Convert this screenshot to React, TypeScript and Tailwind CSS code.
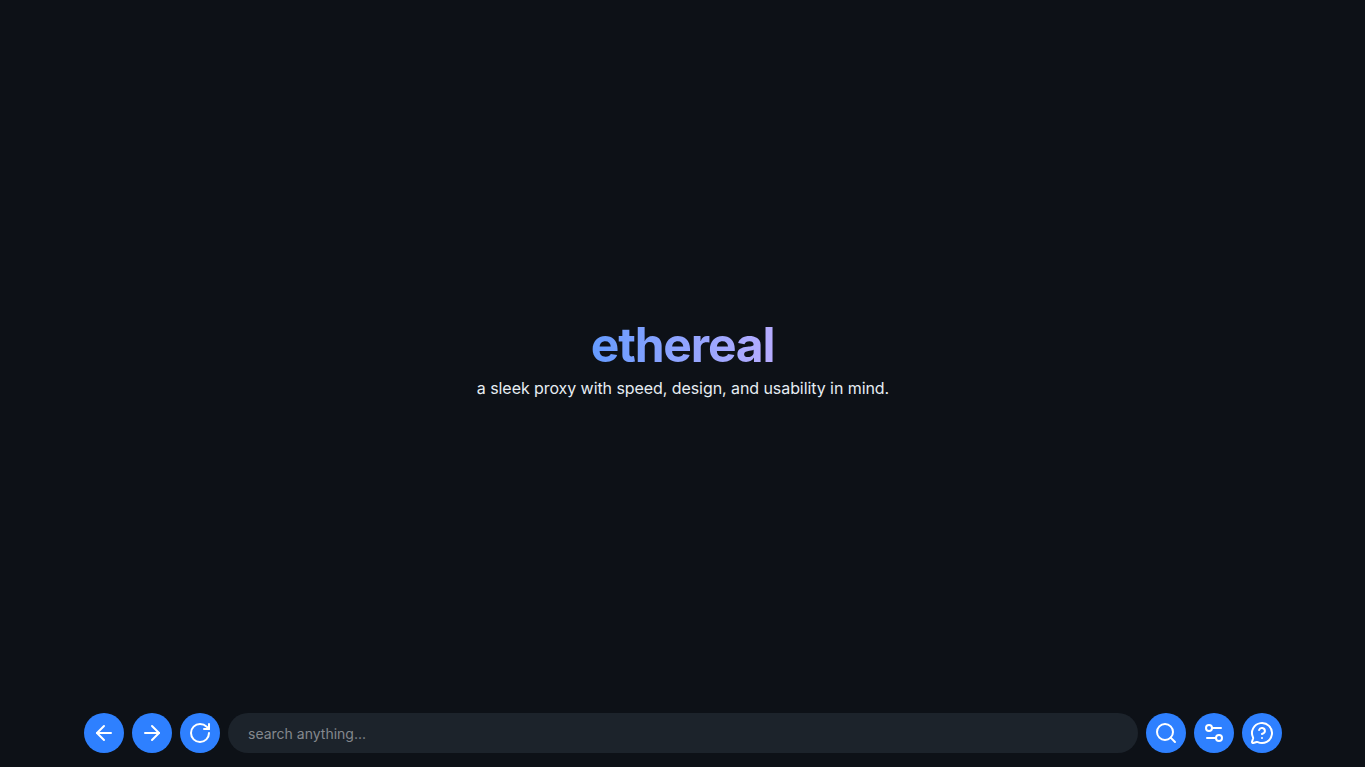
import { ArrowLeft, ArrowRight, RotateCw, Search, Settings2, MessageCircleQuestion } from 'lucide-react';
import type { ReactNode } from 'react';

function RoundButton({ children }: { children: ReactNode }) {
  return (
    <button className="w-10 h-10 shrink-0 rounded-full bg-[#2e80ff] text-white flex items-center justify-center">
      {children}
    </button>
  );
}

export default function App() {
  return (
    <div className="h-screen bg-[#0d1117] flex flex-col font-['Inter',sans-serif]">
      {/* hero */}
      <main className="flex-1 flex flex-col items-center justify-center pt-[4px]">
        <h1 className="text-[48px] leading-[56px] font-bold tracking-[-0.025em] text-transparent bg-clip-text bg-gradient-to-r from-[#649bff] to-[#b6acff]">
          ethereal
        </h1>
        <p className="text-base leading-6 tracking-[-0.07px] text-[#e6edf3] mt-[3px] ml-[1px]">
          a sleek proxy with speed, design, and usability in mind.
        </p>
      </main>

      {/* bottom bar */}
      <div className="flex items-center gap-2 pl-[84px] pr-[83px] pb-[14px]">
        <RoundButton><ArrowLeft size={24} strokeWidth={2} /></RoundButton>
        <RoundButton><ArrowRight size={24} strokeWidth={2} /></RoundButton>
        <RoundButton><RotateCw size={24} strokeWidth={2} /></RoundButton>
        <input
          className="flex-1 h-10 rounded-full bg-[#1c232b] px-5 text-sm text-white outline-none placeholder:text-[#84888e]"
          placeholder="search anything..."
        />
        <RoundButton><Search size={24} strokeWidth={2} /></RoundButton>
        <RoundButton><Settings2 size={24} strokeWidth={2} /></RoundButton>
        <RoundButton><MessageCircleQuestion size={24} strokeWidth={2} /></RoundButton>
      </div>
    </div>
  );
}
